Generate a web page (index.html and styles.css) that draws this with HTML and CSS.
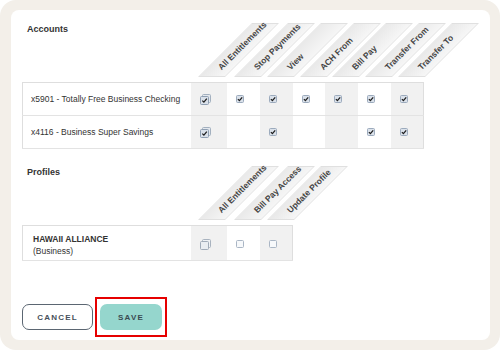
FILE: index.html
```html
<!DOCTYPE html>
<html lang="en">
<head>
    <meta charset="UTF-8">
    <title>Entitlements</title>
    <link rel="stylesheet" href="styles.css">
</head>
<body>
    <svg class="defs" width="0" height="0">
        <symbol id="chk" viewBox="0 0 8 8">
            <rect x=".5" y=".5" width="7" height="7" rx="1" fill="#dae1ea" stroke="#9cabbd"/>
            <path d="M1.9 4.1l1.5 1.5 2.8-3.3" fill="none" stroke="#1f1f1f" stroke-width="1.3"/>
        </symbol>
        <symbol id="all" viewBox="0 0 11 11">
            <rect x="2.5" y=".5" width="8" height="8" rx="1" fill="#e3e8ee" stroke="#a3b0bf"/>
            <rect x=".5" y="2.5" width="8" height="8" rx="1" fill="#dae1ea" stroke="#8f9fb2"/>
            <path d="M2.3 6.6l1.6 1.5 2.9-3.4" fill="none" stroke="#1f1f1f" stroke-width="1.3"/>
        </symbol>
        <symbol id="box" viewBox="0 0 8 8">
            <rect x=".5" y=".5" width="7" height="7" rx="1" fill="#f7f9fb" stroke="#aab6c5"/>
        </symbol>
        <symbol id="allbox" viewBox="0 0 11 11">
            <rect x="2.5" y=".5" width="8" height="8" rx="1" fill="#eef1f4" stroke="#a9b3bf"/>
            <rect x=".5" y="2.5" width="8" height="8" rx="1" fill="#e9edf1" stroke="#a0abb8"/>
        </symbol>
    </svg>

    <div class="frame">
        <div class="card">

            <!-- accounts -->
            <div class="head">
                <div class="title">Accounts</div>
                <div class="hcell wide"><span class="hlab">All Entitlements</span></div>
                <div class="hcell"><span class="hlab">Stop Payments</span></div>
                <div class="hcell"><span class="hlab">View</span></div>
                <div class="hcell narrow"><span class="hlab">ACH From</span></div>
                <div class="hcell"><span class="hlab">Bill Pay</span></div>
                <div class="hcell"><span class="hlab">Transfer From</span></div>
                <div class="hcell"><span class="hlab">Transfer To</span></div>
            </div>
            <table class="grid">
                <tr>
                    <td class="name">x5901 - Totally Free Business Checking</td>
                    <td class="c wide g"><svg class="ic2"><use href="#all"/></svg></td>
                    <td class="c"><svg class="ic"><use href="#chk"/></svg></td>
                    <td class="c g"><svg class="ic"><use href="#chk"/></svg></td>
                    <td class="c narrow"><svg class="ic"><use href="#chk"/></svg></td>
                    <td class="c g"><svg class="ic"><use href="#chk"/></svg></td>
                    <td class="c"><svg class="ic"><use href="#chk"/></svg></td>
                    <td class="c g"><svg class="ic"><use href="#chk"/></svg></td>
                </tr>
                <tr>
                    <td class="name">x4116 - Business Super Savings</td>
                    <td class="c wide g"><svg class="ic2"><use href="#all"/></svg></td>
                    <td class="c"></td>
                    <td class="c g"><svg class="ic"><use href="#chk"/></svg></td>
                    <td class="c narrow"></td>
                    <td class="c g"></td>
                    <td class="c"><svg class="ic"><use href="#chk"/></svg></td>
                    <td class="c g"><svg class="ic"><use href="#chk"/></svg></td>
                </tr>
            </table>

            <!-- profiles -->
            <div class="head profiles">
                <div class="title">Profiles</div>
                <div class="hcell wide"><span class="hlab">All Entitlements</span></div>
                <div class="hcell"><span class="hlab">Bill Pay Access</span></div>
                <div class="hcell"><span class="hlab">Update Profile</span></div>
            </div>
            <table class="grid">
                <tr class="prow">
                    <td class="name"><b>HAWAII ALLIANCE</b><br>(Business)</td>
                    <td class="c wide g"><svg class="ic2"><use href="#allbox"/></svg></td>
                    <td class="c"><svg class="ic"><use href="#box"/></svg></td>
                    <td class="c g"><svg class="ic"><use href="#box"/></svg></td>
                </tr>
            </table>

            <div class="actions">
                <button class="btn cancel">CANCEL</button>
                <span class="mark"><button class="btn save">SAVE</button></span>
            </div>
        </div>
    </div>
</body>
</html>
```

FILE: styles.css
```css
body{
    margin:0;
    padding:0;
    background-color:white;
    font-family:"Liberation Sans", Arial, sans-serif;
    color:#333;
}
.defs{
    position:absolute;
    width:0;
    height:0;
}
.frame{
    width:500px;
    height:350px;
    box-sizing:border-box;
    padding:10px 10px 10px 11px;
    background-color:#f3efe9;
    border-radius:16px;
}
.card{
    height:100%;
    box-sizing:border-box;
    padding:13px 11px 0 11px;
    background-color:white;
    border-radius:8px;
}
.head{
    display:flex;
    height:54px;
    margin-bottom:5px;
}
.profiles{
    margin-top:17px;
}
.title{
    width:163px;
    padding-left:5px;
    padding-top:1px;
    font-size:9px;
    font-weight:bold;
    color:#333;
}
.hcell{
    position:relative;
    width:33px;
    flex-shrink:0;
}
.hcell.wide{
    width:36px;
}
.hcell.narrow{
    width:32px;
}
.hcell::before{
    content:"";
    position:absolute;
    left:8px;
    bottom:0;
    width:27px;
    height:100%;
    box-sizing:border-box;
    background:linear-gradient(to right, #e9e9e9, #f6f6f6);
    border:1px solid #e0e0e0;
    transform:skewX(-45deg);
    transform-origin:bottom left;
}
.hlab{
    position:absolute;
    left:33px;
    bottom:5px;
    font-size:8.5px;
    font-weight:bold;
    line-height:10px;
    color:#444;
    white-space:nowrap;
    transform:rotate(-45deg);
    transform-origin:0 100%;
}
.grid{
    border-collapse:collapse;
    border:1px solid #dedede;
    table-layout:fixed;
}
.grid tr{
    height:33px;
    border-bottom:1px solid #e3e3e3;
}
.grid td{
    padding:0;
}
.name{
    width:168px;
    padding-left:8px !important;
    box-sizing:border-box;
    font-size:8.5px;
    color:#333;
}
.c{
    width:33px;
    padding-left:9px !important;
    box-sizing:border-box;
    line-height:0;
}
.c.wide{
    width:36px;
}
.c.narrow{
    width:32px;
}
.g{
    background-color:#f1f1f1;
}
.ic{
    width:8px;
    height:8px;
}
.ic2{
    width:11px;
    height:11px;
}
.prow{
    height:35px !important;
}
.prow .name{
    padding-left:10px !important;
    padding-top:3px !important;
    line-height:12px;
}
.prow .name b{
    font-weight:bold;
    color:#333;
}
.prow .c{
    padding-top:2px !important;
}
.actions{
    display:flex;
    align-items:center;
    margin-top:36px;
}
.btn{
    height:26px;
    border-radius:7px;
    font-family:"Liberation Sans", Arial, sans-serif;
    font-size:8px;
    font-weight:bold;
    letter-spacing:1.2px;
    cursor:pointer;
}
.cancel{
    width:71px;
    background-color:white;
    border:1.5px solid #5b6672;
    color:#45505b;
}
.mark{
    display:inline-flex;
    margin-left:2px;
    padding:5px 3px;
    border:2px solid rgb(230, 0, 0);
}
.save{
    width:62px;
    background-color:#95d6cd;
    border:none;
    color:#3a4a52;
}
```
